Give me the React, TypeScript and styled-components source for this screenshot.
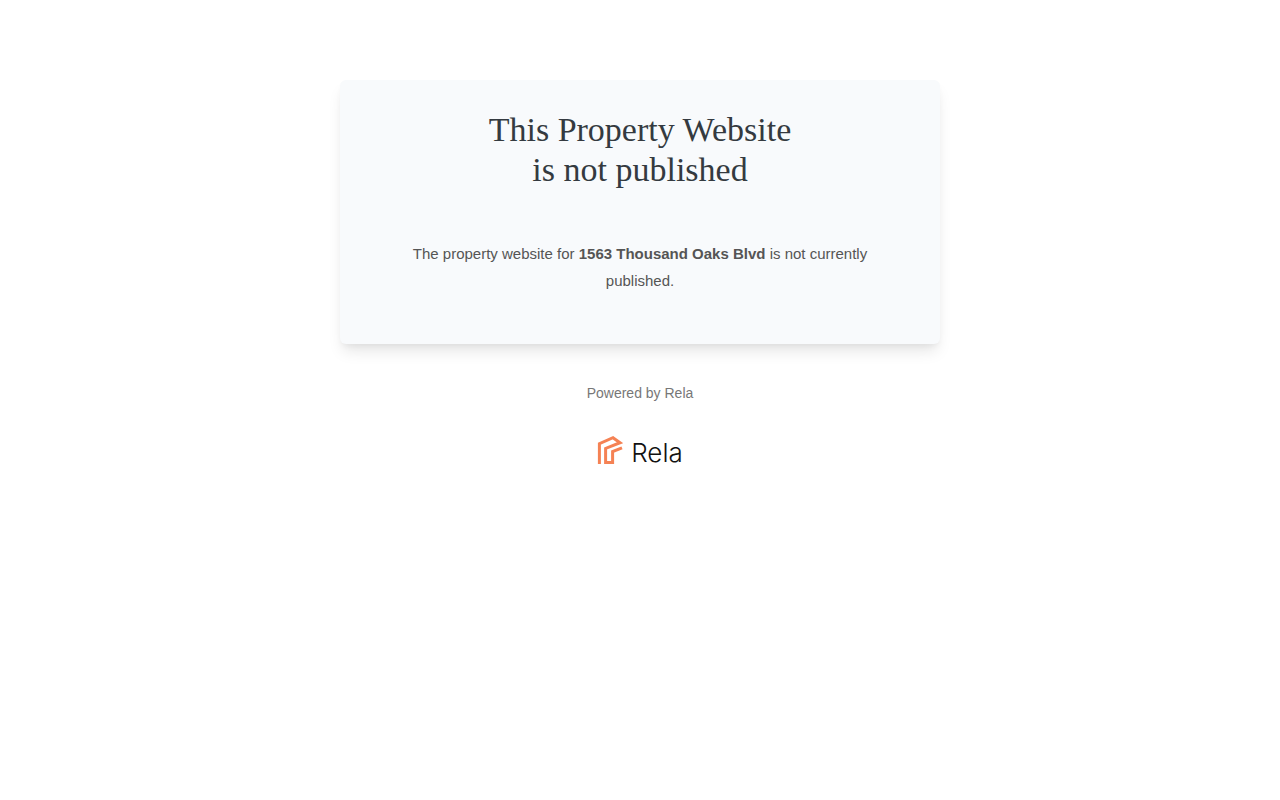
import React from "react";
import styled, { createGlobalStyle } from "styled-components";

const GlobalStyle = createGlobalStyle`
  *, *::before, *::after { box-sizing: border-box; }
  body {
    margin: 0;
    background: #fff;
    color: #4a4a4a;
    font-family: "Liberation Sans", Arial, sans-serif;
  }
`;

const Page = styled.main`
  display: flex;
  flex-direction: column;
  align-items: center;
  padding: 80px 20px 40px;
  text-align: center;
`;

const Card = styled.section`
  width: 100%;
  max-width: 600px;
  padding: 30px 60px 50px;
  border-radius: 6px;
  background: #f8fafc;
  box-shadow: 0 10px 15px -3px rgba(0, 0, 0, 0.1), 0 4px 6px -2px rgba(0, 0, 0, 0.05);
`;

const Title = styled.h1`
  margin: 0 0 50px;
  color: #343a40;
  font: 400 34px/40px "Liberation Serif", "Times New Roman", serif;
`;

const Message = styled.p`
  margin: 0;
  color: #555;
  font-size: 15px;
  line-height: 27px;
`;

const Footer = styled.footer`
  display: flex;
  flex-direction: column;
  align-items: center;
  gap: 32px;
  margin-top: 40px;
`;

const PoweredBy = styled.p`
  margin: 0;
  color: #777;
  font-size: 14px;
  line-height: 18px;
`;

const Logo = styled.div`
  display: flex;
  align-items: flex-start;
  gap: 8px;
`;

const LogoMark = styled.svg`
  display: block;
  width: 26px;
  height: 32px;
`;

const LogoName = styled.span`
  color: #111;
  font: 300 26px/38px Inter, sans-serif;
`;

export default function App() {
  return (
    <>
      <GlobalStyle />
      <Page>
        <Card>
          <Title>
            This Property Website
            <br />
            is not published
          </Title>
          <Message>
            The property website for <strong>1563 Thousand Oaks Blvd</strong> is not currently
            published.
          </Message>
        </Card>
        <Footer>
          <PoweredBy>Powered by Rela</PoweredBy>
          <Logo>
            <LogoMark viewBox="0 0 26 32" fill="none" stroke="#f58254" strokeWidth="3" aria-hidden="true">
              <path d="M2.4 30V9.7L16 3.7L23 8.7L8.6 14.4V28.5H15.6V17.6L25 13.8" />
            </LogoMark>
            <LogoName>Rela</LogoName>
          </Logo>
        </Footer>
      </Page>
    </>
  );
}
